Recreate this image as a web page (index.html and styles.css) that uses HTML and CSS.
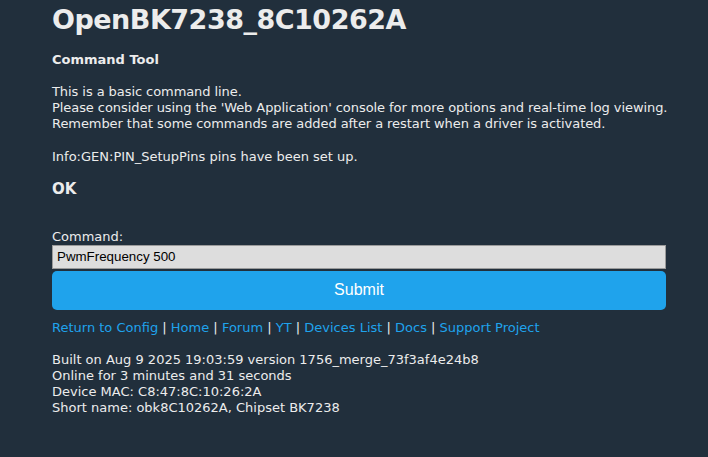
FILE: index.html
```html
<!DOCTYPE html>
<html>
<head>
<meta charset="utf-8">
<title>OpenBK7238_8C10262A</title>
<link rel="stylesheet" href="styles.css">
</head>
<body>
<div class="page">
  <h1 class="title">OpenBK7238_8C10262A</h1>
  <h3 class="subtitle">Command Tool</h3>
  <p class="intro">This is a basic command line.<br>Please consider using the 'Web Application' console for more options and real-time log viewing.<br>Remember that some commands are added after a restart when a driver is activated.</p>
  <p class="info">Info:GEN:PIN_SetupPins pins have been set up.</p>
  <h4 class="ok">OK</h4>
  <form class="cmd-form">
    <label class="cmd-label" for="cmd">Command:</label>
    <input class="cmd-input" id="cmd" type="text" value="PwmFrequency 500">
    <button class="submit" type="button">Submit</button>
  </form>
  <div class="links"><a href="#">Return to Config</a> | <a href="#">Home</a> | <a href="#">Forum</a> | <a href="#">YT</a> | <a href="#">Devices List</a> | <a href="#">Docs</a> | <a href="#">Support Project</a></div>
  <div class="build">
    <div>Built on Aug 9 2025 19:03:59 version 1756_merge_73f3af4e24b8</div>
    <div>Online for 3 minutes and 31 seconds</div>
    <div>Device MAC: C8:47:8C:10:26:2A</div>
    <div>Short name: obk8C10262A, Chipset BK7238</div>
  </div>
</div>
</body>
</html>
```

FILE: styles.css
```css
html, body {
  margin: 0;
  padding: 0;
}
body {
  background: #212f3c;
  color: #ececec;
  font-family: "DejaVu Sans", Verdana, sans-serif;
  font-size: 13px;
  line-height: 16px;
}
.page {
  width: 614px;
  margin-left: 52px;
  display: flex;
  flex-direction: column;
}
.title {
  margin: 0;
  font-size: 27px;
  line-height: 40px;
  letter-spacing: -0.5px;
  font-weight: bold;
}
.subtitle {
  margin: 11.5px 0 0;
  font-size: 13px;
  line-height: 16px;
  font-weight: bold;
}
.intro {
  margin: 16px 0 0;
  white-space: nowrap;
  letter-spacing: -0.07px;
}
.info {
  margin: 17.5px 0 0;
}
.ok {
  margin: 14.5px 0 0;
  font-size: 15px;
  line-height: 18px;
  font-weight: bold;
}
.cmd-form {
  margin: 31px 0 0;
  display: flex;
  flex-direction: column;
}
.cmd-label {
  line-height: 16px;
}
.cmd-input {
  box-sizing: border-box;
  margin: 0;
  width: 100%;
  height: 24px;
  padding: 0 4px;
  background: #dddddd;
  color: #000;
  border: 1px solid #9a9a9a;
  border-radius: 0;
  font-family: "Liberation Sans", Arial, sans-serif;
  font-size: 13.33px;
}
.submit {
  margin: 2px 0 0;
  height: 39px;
  width: 100%;
  border: 0;
  border-radius: 5px;
  background: #1fa3ec;
  color: #fff;
  font-family: "Liberation Sans", Arial, sans-serif;
  font-size: 16px;
}
.links {
  margin: 10px 0 0;
}
.links a {
  color: #1fa3ec;
  text-decoration: none;
}
.build {
  margin: 16px 0 0;
}
```
